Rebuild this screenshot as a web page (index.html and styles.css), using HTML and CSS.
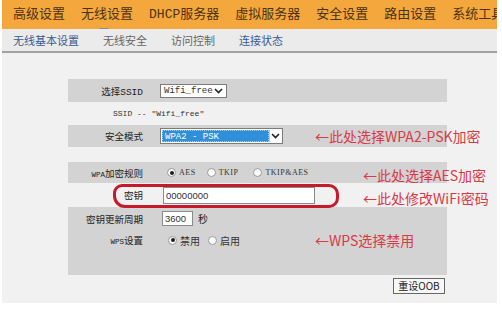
FILE: index.html
```html
<!DOCTYPE html>
<html lang="zh-CN">
<head>
  <meta charset="UTF-8" />
  <title>无线安全</title>
  <link rel="stylesheet" href="styles.css">
</head>
<body>

  <div class="frame">
    <div class="topnav">
      <span>高级设置</span>
      <span class="on">无线设置</span>
      <span>DHCP服务器</span>
      <span>虚拟服务器</span>
      <span>安全设置</span>
      <span>路由设置</span>
      <span>系统工具</span>
    </div>

    <div class="subnav">
      <span class="blue">无线基本设置</span>
      <span>无线安全</span>
      <span>访问控制</span>
      <span class="blue">连接状态</span>
    </div>

    <div class="content">
      <div class="form">

        <div class="row band h23">
          <div class="lbl">选择<span class="mono">SSID</span></div>
          <div class="sel sel-ssid">
            <span>Wifi_free</span>
            <svg width="9" height="6" viewBox="0 0 9 6"><path d="M1 1 L4.5 4.5 L8 1" fill="none" stroke="#222" stroke-width="1.6"/></svg>
          </div>
        </div>

        <div class="row ssid-line h23">SSID -- "Wifi_free"</div>

        <div class="row band h22">
          <div class="lbl">安全模式</div>
          <div class="sel sel-mode">
            <span class="picked">WPA2 - PSK</span>
            <span class="arrow">
              <svg width="9" height="6" viewBox="0 0 9 6"><path d="M1 1 L4.5 4.5 L8 1" fill="none" stroke="#222" stroke-width="1.6"/></svg>
            </span>
          </div>
          <div class="note n1">←此处选择WPA2-PSK加密</div>
        </div>

        <div class="gap"></div>

        <div class="row band h21">
          <div class="lbl"><span class="mono small">WPA</span>加密规则</div>
          <div class="radios">
            <span class="radio checked"></span><span class="rtxt r1">AES</span>
            <span class="radio"></span><span class="rtxt r2">TKIP</span>
            <span class="radio"></span><span class="rtxt">TKIP&amp;AES</span>
          </div>
          <div class="note n2">←此处选择AES加密</div>
        </div>

        <div class="row h24">
          <div class="lbl">密钥</div>
          <div class="inp inp-key">00000000</div>
          <div class="ring"></div>
          <div class="note n2 low">←此处修改WiFi密码</div>
        </div>

        <div class="band group">
          <div class="row h23">
            <div class="lbl">密钥更新周期</div>
            <div class="inp inp-time">3600</div>
            <span class="unit">秒</span>
          </div>
          <div class="row h20">
            <div class="lbl"><span class="mono small">WPS</span>设置</div>
            <div class="radios wps">
              <span class="radio checked"></span><span class="rtxt cjk w1">禁用</span>
              <span class="radio"></span><span class="rtxt cjk">启用</span>
            </div>
            <div class="note n1">←WPS选择禁用</div>
          </div>
        </div>

        <div class="btn-row">
          <span class="btn">重设OOB</span>
        </div>
      </div>

      <div class="notice">注意</div>
    </div>
  </div>

</body>
</html>
```

FILE: styles.css
```css
* { box-sizing: border-box; }
body {
  margin: 0;
  background: #fff;
  font-family: "Noto Sans CJK SC", sans-serif;
  color: #222;
}
.frame      { width: 495px; margin-left: 2px; }

/* ----- menu principal ----- */
.topnav {
  height: 29px; background: #f4a73c; display: flex; align-items: center;
  gap: 16px; padding-left: 11px; white-space: nowrap; overflow: hidden;
  font-family: "Liberation Mono", "Noto Sans CJK SC", monospace;
  font-size: 13px; color: #4d3213;
}
.topnav span     { line-height: 29px; }
.topnav .on      { position: relative; }
.topnav .on::after {
  content: ""; position: absolute; left: 18px; bottom: -4px;
  border-left: 5px solid transparent; border-right: 5px solid transparent;
  border-top: 5px solid #8c8c8c;
}

/* ----- submenu ----- */
.subnav {
  height: 24px; background: #ebebeb; border-bottom: 2px solid #a2a2a2;
  display: flex; align-items: center; gap: 24px; padding-left: 11px;
  font-size: 11px; color: #666;
}
.subnav .blue    { color: #3a5b93; }

/* ----- área de conteúdo ----- */
.content    { height: 250px; background: #f1f1f1; padding-top: 26px; position: relative; }
.form       { margin-left: 66px; width: 379px; }
.row        { display: flex; align-items: center; position: relative; font-size: 9.5px; }
.band       { background: #d3d3d3; }
.h20 { height: 20px; } .h21 { height: 21px; } .h22 { height: 22px; }
.h23 { height: 23px; } .h24 { height: 24px; }
.gap        { height: 15px; }
.group      { height: 68px; }

.lbl        { width: 75px; text-align: right; margin-right: 18px; white-space: nowrap; }
.mono       { font-family: "Liberation Mono", monospace; }
.small      { font-size: 7.5px; }

.sel {
  display: flex; align-items: center; background: #fff; border: 1px solid #7b7b7b;
  font-family: "Liberation Mono", monospace; font-size: 9px; color: #333;
}
.sel-ssid   { width: 67px; height: 14px; margin-left: -1px; padding: 0 3px; justify-content: space-between; }
.sel-mode   { width: 123px; height: 16px; margin-left: -1px; padding: 1px; }
.sel-mode .picked {
  flex: 1; height: 100%; background: #2f90d9; color: #fff; padding-left: 2px;
  line-height: 12px; border: 1px dotted #9fd0f5;
}
.sel-mode .arrow {
  width: 12px; height: 100%; display: flex; align-items: center; justify-content: center;
  border-left: 1px solid #c9c9c9;
}

.ssid-line {
  padding-left: 45px; font-family: "Liberation Mono", monospace; font-size: 8px; color: #333;
}

.radios     { display: flex; align-items: center; margin-left: 6px; }
.radio {
  width: 9px; height: 9px; border-radius: 50%; border: 1px solid #9a9a9a;
  background: #fbfbfb; display: flex; align-items: center; justify-content: center;
}
.radio.checked::after { content: ""; width: 4px; height: 4px; border-radius: 50%; background: #1c1c1c; }
.rtxt       { margin-left: 3px; font-family: "Liberation Serif", serif; font-size: 8px; letter-spacing: 0.5px; color: #333; }
.rtxt.r1    { margin-right: 11px; }
.rtxt.r2    { margin-right: 15px; }
.rtxt.cjk   { font-family: "Noto Sans CJK SC", sans-serif; font-size: 10px; letter-spacing: 0; }
.rtxt.w1    { margin-right: 8px; }
.wps        { margin-left: 7px; }

.inp {
  background: #fff; border: 1px solid #8a8a8a; font-family: "Liberation Sans", Arial, sans-serif;
  font-size: 9.5px; color: #333; padding-left: 2px; display: flex; align-items: center;
}
.inp-key    { width: 152px; height: 17px; margin-left: 2px; }
.inp-time   { width: 31px; height: 15px; margin-left: 1px; }
.unit       { margin-left: 5px; font-size: 10px; }

/* anotações em vermelho sobre a tela */
.ring {
  position: absolute; left: 45px; top: 1px; width: 226px; height: 24px;
  border: 3px solid #c61a2b; border-radius: 9px 10px 10px 12px;
}
.note {
  position: absolute; top: 50%; margin-top: -9px; line-height: 18px; white-space: nowrap;
  font-size: 14px; color: #d93a48;
}
.note.n1    { left: 247px; }
.note.n2    { left: 295px; margin-top: -7px; }
.note.low   { margin-top: -6px; }

.btn-row    { display: flex; justify-content: flex-end; padding-right: 2px; margin-top: 3px; }
.btn {
  width: 52px; height: 16px; border: 1px solid #666; background: #f7f7f7;
  font-size: 10px; line-height: 14px; text-align: center; color: #222;
}
.notice     { position: absolute; left: 63px; top: 249px; font-size: 12px; color: #d93a48; }
```
